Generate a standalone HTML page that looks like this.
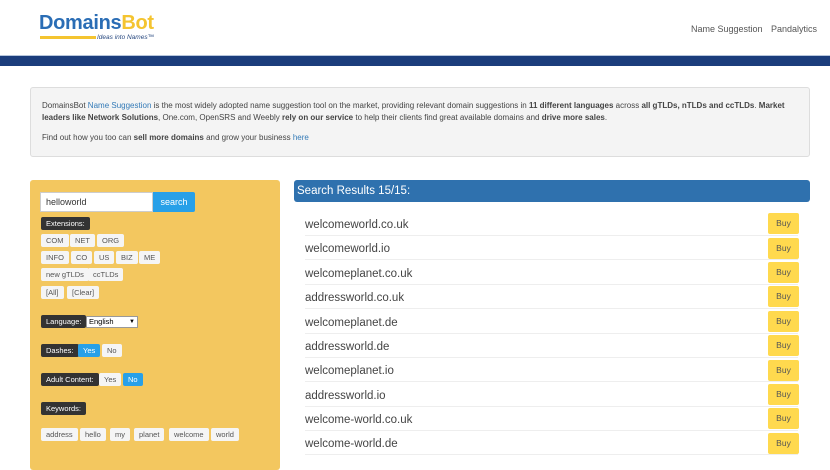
<!DOCTYPE html>
<html><head><style>
*{box-sizing:border-box;margin:0;padding:0}
body{width:830px;height:458px;overflow:hidden;font-family:"Liberation Sans",sans-serif;background:#fff;position:relative;color:#333}
.abs{position:absolute}
.logo1{left:39px;top:12px;font-size:20px;font-weight:bold;letter-spacing:-0.3px;color:#2a6db5}
.logo1 span{color:#f4c430}
.ybar{left:40px;top:36px;width:56px;height:3px;background:#f4c430}
.tag{left:97px;top:34px;font-size:6.5px;font-style:italic;color:#2a4a80}
.nav{top:24px;font-size:9px;color:#555}
.line{left:0;top:55px;width:830px;height:1px;background:#b7c6dc}
.bar{left:0;top:56px;width:830px;height:10px;background:#1b3d7c}
.info{left:30px;top:87px;width:780px;height:70px;background:#f4f4f4;border:1px solid #ddd;border-radius:3px;font-size:8px;line-height:12px;padding:12px 11px;color:#444}
.info a{color:#337ab7}
.left{left:30px;top:180px;width:250px;height:290px;background:#f3c75f;border-radius:3px}
.inp{left:40px;top:192px;width:113px;height:20px;background:#fff;border:1px solid #ccc;font-size:9px;padding:4px 5px;color:#333}
.sbtn{left:153px;top:192px;width:42px;height:20px;background:#28a0e8;color:#fff;font-size:9px;text-align:center;line-height:20px;border-radius:0 2px 2px 0}
.lab{background:#333;color:#fff;font-size:7.5px;height:13px;line-height:13px;padding:0 5px;border-radius:2px}
.ch{background:#f5f5f5;color:#555;font-size:7.5px;height:13px;line-height:13px;padding:0 5px;border-radius:2px}
.on{background:#28a0e8;color:#fff}
.sel{left:86px;top:316px;width:52px;height:12px;background:#fff;border:1px solid #999;font-size:7.5px;line-height:10px;padding-left:2px;color:#000}
.rh{left:294px;top:180px;width:516px;height:22px;background:#2f71ae;border-radius:3px;color:#fff;font-size:11.5px;line-height:22px;padding-left:3px}
.row{left:305px;width:493px;height:24px;border-bottom:1px solid #eee;font-size:11.5px;line-height:26px;color:#444}
.buy{left:768px;width:31px;height:21px;background:#ffd94e;border-radius:2px;font-size:8.5px;color:#555;text-align:center;line-height:21px}
</style></head><body>
<div class="abs logo1">Domains<span>Bot</span></div>
<div class="abs ybar"></div>
<div class="abs tag">Ideas into Names™</div>
<div class="abs nav" style="left:691px">Name Suggestion</div>
<div class="abs nav" style="left:771px">Pandalytics</div>
<div class="abs line"></div><div class="abs bar"></div>
<div class="abs info">DomainsBot <a>Name Suggestion</a> is the most widely adopted name suggestion tool on the market, providing relevant domain suggestions in <b>11 different languages</b> across <b>all gTLDs, nTLDs and ccTLDs</b>. <b>Market</b><br><b>leaders like Network Solutions</b>, One.com, OpenSRS and Weebly <b>rely on our service</b> to help their clients find great available domains and <b>drive more sales</b>.<div style="height:8px"></div>Find out how you too can <b>sell more domains</b> and grow your business <a>here</a></div>
<div class="abs left"></div>
<div class="abs inp">helloworld</div><div class="abs sbtn">search</div>
<div class="abs lab" style="left:41px;top:217px">Extensions:</div>
<div class="abs ch" style="left:41px;top:234px">COM</div>
<div class="abs ch" style="left:70px;top:234px">NET</div>
<div class="abs ch" style="left:97px;top:234px">ORG</div>
<div class="abs ch" style="left:41px;top:251px">INFO</div>
<div class="abs ch" style="left:71px;top:251px">CO</div>
<div class="abs ch" style="left:94px;top:251px">US</div>
<div class="abs ch" style="left:116px;top:251px">BIZ</div>
<div class="abs ch" style="left:139px;top:251px">ME</div>
<div class="abs ch" style="left:41px;top:268px">new gTLDs</div>
<div class="abs ch" style="left:88px;top:268px">ccTLDs</div>
<div class="abs ch" style="left:41px;top:286px">[All]</div>
<div class="abs ch" style="left:67px;top:286px">[Clear]</div>
<div class="abs lab" style="left:41px;top:315px">Language:</div>
<div class="abs sel">English <span style="float:right;font-size:6px;padding-right:2px">▼</span></div>
<div class="abs lab" style="left:41px;top:344px">Dashes:</div>
<div class="abs ch on" style="left:78px;top:344px">Yes</div>
<div class="abs ch" style="left:102px;top:344px">No</div>
<div class="abs lab" style="left:41px;top:373px">Adult Content:</div>
<div class="abs ch" style="left:99px;top:373px">Yes</div>
<div class="abs ch on" style="left:123px;top:373px">No</div>
<div class="abs lab" style="left:41px;top:402px">Keywords:</div>
<div class="abs ch" style="left:41px;top:428px">address</div>
<div class="abs ch" style="left:80px;top:428px">hello</div>
<div class="abs ch" style="left:110px;top:428px">my</div>
<div class="abs ch" style="left:134px;top:428px">planet</div>
<div class="abs ch" style="left:169px;top:428px">welcome</div>
<div class="abs ch" style="left:211px;top:428px">world</div>
<div class="abs rh">Search Results 15/15:</div>
<div class="abs row" style="top:212px">welcomeworld.co.uk</div><div class="abs buy" style="top:213px">Buy</div>
<div class="abs row" style="top:236px">welcomeworld.io</div><div class="abs buy" style="top:238px">Buy</div>
<div class="abs row" style="top:261px">welcomeplanet.co.uk</div><div class="abs buy" style="top:262px">Buy</div>
<div class="abs row" style="top:285px">addressworld.co.uk</div><div class="abs buy" style="top:286px">Buy</div>
<div class="abs row" style="top:310px">welcomeplanet.de</div><div class="abs buy" style="top:311px">Buy</div>
<div class="abs row" style="top:334px">addressworld.de</div><div class="abs buy" style="top:335px">Buy</div>
<div class="abs row" style="top:358px">welcomeplanet.io</div><div class="abs buy" style="top:360px">Buy</div>
<div class="abs row" style="top:383px">addressworld.io</div><div class="abs buy" style="top:384px">Buy</div>
<div class="abs row" style="top:407px">welcome-world.co.uk</div><div class="abs buy" style="top:408px">Buy</div>
<div class="abs row" style="top:431px">welcome-world.de</div><div class="abs buy" style="top:433px">Buy</div>
</body></html>
